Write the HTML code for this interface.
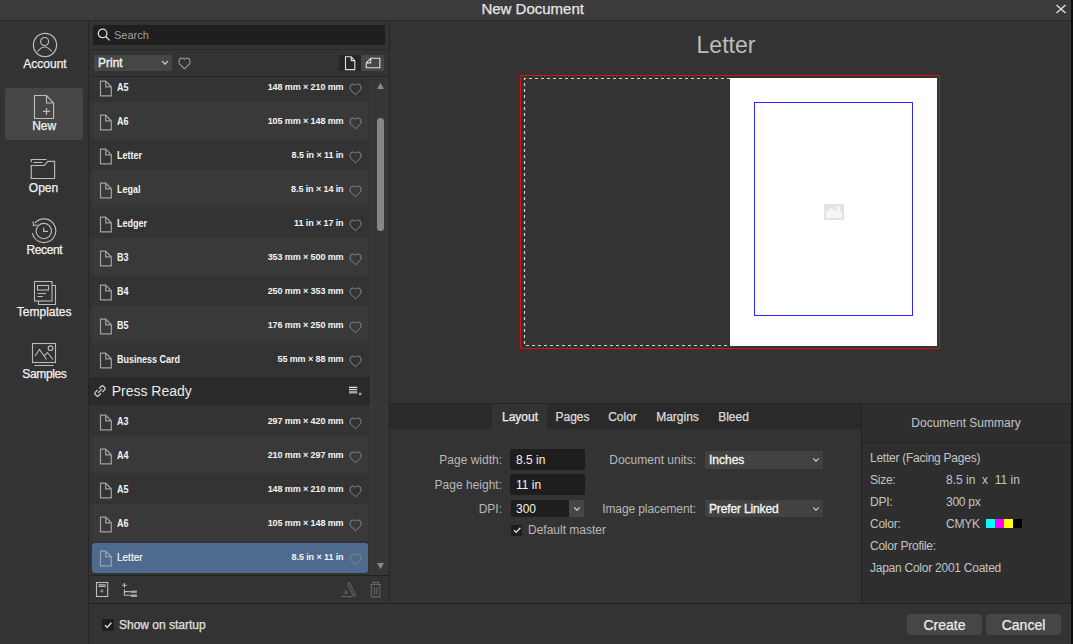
<!DOCTYPE html>
<html><head><meta charset="utf-8"><style>
html,body{margin:0;padding:0;width:1073px;height:644px;overflow:hidden;background:#333;}
body div{position:absolute;}
.t{white-space:nowrap;line-height:1;font-family:"Liberation Sans", sans-serif;}
.b{-webkit-text-stroke:0.25px currentColor;}
body{font-family:"Liberation Sans", sans-serif;}
</style></head><body>
<div style="left:0px;top:0px;width:1073px;height:644px;background:#333333;"></div>
<div style="left:0px;top:0px;width:1073px;height:20px;background:#3b3b3b;"></div>
<div style="left:0px;top:20px;width:1071px;height:1px;background:#282828;"></div>
<div class="t b" style="top:0.90px;font-size:15px;color:#e6e6e6;font-weight:normal;left:232.70000000000005px;width:600px;text-align:center;">New Document</div>
<svg style="position:absolute;left:1055px;top:4px;" width="12" height="10" viewBox="0 0 12 10"><path d="M1.5 1 L10.5 9 M10.5 1 L1.5 9" stroke="#e0e0e0" stroke-width="1.4"/></svg>
<div style="left:1071px;top:0px;width:2px;height:644px;background:#0e0e0e;"></div>
<div style="left:5px;top:88px;width:78px;height:52px;background:#464646;border-radius:3px;"></div>
<svg style="position:absolute;left:32px;top:32px;" width="26" height="26" viewBox="0 0 26 26"><g fill="none" stroke="#bcbcbc" stroke-width="1.2"><circle cx="13" cy="13" r="11.6"/><circle cx="12.6" cy="9.5" r="4"/><path d="M5.5 19.5 Q12.6 10.5 19.8 19.5"/></g></svg>
<div class="t b" style="top:57.54px;font-size:12px;color:#f2f2f2;font-weight:normal;left:-255px;width:600px;text-align:center;">Account</div>
<svg style="position:absolute;left:33px;top:94px;" width="23" height="26" viewBox="0 0 23 26"><g fill="none" stroke="#bcbcbc" stroke-width="1.15"><path d="M1.5 1.5 H13.5 L20.6 9 V24.5 H1.5 Z M13.5 1.5 V9 H20.6"/><path d="M13.5 13.9 V20.9 M10 17.4 H17"/></g></svg>
<div class="t b" style="top:120.14px;font-size:12px;color:#f2f2f2;font-weight:normal;left:-255.8px;width:600px;text-align:center;">New</div>
<svg style="position:absolute;left:30px;top:157px;" width="26" height="23" viewBox="0 0 26 23"><g fill="none" stroke="#bcbcbc" stroke-width="1.15"><path d="M1.25 5.2 V2.5 H16.5 M3.4 5.5 H12.4 M1.25 8.5 H14.3 L17.8 4.4 H24.6 V21.5 H1.25 Z"/></g></svg>
<div class="t b" style="top:181.64px;font-size:12px;color:#f2f2f2;font-weight:normal;left:-256.5px;width:600px;text-align:center;">Open</div>
<svg style="position:absolute;left:31px;top:217px;" width="27" height="27" viewBox="0 0 27 27"><g fill="none" stroke="#bcbcbc" stroke-width="1.15"><path d="M1.4 16 A11.8 11.8 0 1 0 3.96 6.12"/><path d="M2 4.5 L2.5 8.5 L6.5 8"/><circle cx="12.8" cy="14" r="7.7"/><path d="M12.7 10.5 V14.4 H17"/></g></svg>
<div class="t b" style="top:243.74px;font-size:12px;color:#f2f2f2;font-weight:normal;left:-255.7px;width:600px;text-align:center;letter-spacing:-0.4px;">Recent</div>
<svg style="position:absolute;left:33px;top:280px;" width="24" height="26" viewBox="0 0 24 26"><g fill="none" stroke="#bcbcbc" stroke-width="1.1"><rect x="1.5" y="1.5" width="17.5" height="19.5"/><path d="M19 5.5 H22.5 V24.5 H5.5 V21"/><rect x="4.5" y="5.5" width="11" height="4.5"/><path d="M4.5 13.5 H13 M4.5 16.5 H10"/></g></svg>
<div class="t b" style="top:305.54px;font-size:12px;color:#f2f2f2;font-weight:normal;left:-255.8px;width:600px;text-align:center;">Templates</div>
<svg style="position:absolute;left:31px;top:342px;" width="26" height="25" viewBox="0 0 26 25"><g fill="none" stroke="#bcbcbc" stroke-width="1.1"><rect x="1.5" y="1.5" width="23" height="19"/><path d="M4 14 L8.5 7.5 L15.5 17.5 M13 14 L16.5 10.5 L22 17.5 M3.5 23.5 H22.5"/><circle cx="19.5" cy="6.2" r="2.3"/></g></svg>
<div class="t b" style="top:367.54px;font-size:12px;color:#f2f2f2;font-weight:normal;left:-255.6px;width:600px;text-align:center;letter-spacing:-0.35px;">Samples</div>
<div style="left:88px;top:20px;width:1px;height:624px;background:#262626;"></div>
<div style="left:389px;top:20px;width:1px;height:583px;background:#262626;"></div>
<div style="left:93px;top:25px;width:292px;height:20px;background:#1f1f1f;border-radius:1px;"></div>
<svg style="position:absolute;left:97px;top:28px;" width="14" height="14" viewBox="0 0 14 14"><g fill="none" stroke="#dcdcdc" stroke-width="1.3"><circle cx="5.6" cy="5.4" r="4.3"/><path d="M8.7 8.5 L12.6 12.4"/></g></svg>
<div class="t" style="top:29.59px;font-size:11px;color:#a0a0a0;font-weight:normal;left:114px;">Search</div>
<div style="left:89px;top:49px;width:300px;height:1px;background:#282828;"></div>
<div style="left:94px;top:55px;width:78px;height:16px;background:#464646;border-radius:1px;"></div>
<div class="t" style="top:57.04px;font-size:12px;color:#f2f2f2;font-weight:normal;left:98px;-webkit-text-stroke:0.35px #f2f2f2;">Print</div>
<svg style="position:absolute;left:161px;top:60px;" width="8" height="6" viewBox="0 0 8 6"><path d="M1.2 1.2 L4 4.2 L6.8 1.2" fill="none" stroke="#dcdcdc" stroke-width="1.1"/></svg>
<svg style="position:absolute;left:178.4px;top:56.5px;" width="13" height="13" viewBox="0 0 13 13"><path d="M6 11.3 L1.2 6.6 Q0.3 5.5 0.5 3.6 Q0.8 0.6 3.3 0.5 Q5 0.5 6 1.9 Q7 0.5 8.7 0.5 Q11.2 0.6 11.5 3.6 Q11.7 5.5 10.8 6.6 Z" fill="none" stroke="#9a9a9a" stroke-width="1.1" transform="translate(0.5,0.5)"/></svg>
<div style="left:339px;top:55px;width:22px;height:16px;background:#262626;"></div>
<div style="left:361px;top:55px;width:23px;height:16px;background:#474747;"></div>
<svg style="position:absolute;left:344px;top:56px;" width="12" height="15" viewBox="0 0 12 15"><path d="M1.5 0.8 H7.2 L10.8 4.6 V13.6 H1.5 Z M7.2 0.8 V4.6 H10.8" fill="none" stroke="#e0e0e0" stroke-width="1.1"/></svg>
<svg style="position:absolute;left:364px;top:57px;" width="18" height="13" viewBox="0 0 18 13"><path d="M2.3 5.9 L6.7 1.2 H15.8 V10.7 H2.3 Z M2.3 5.9 H6.7 V1.2" fill="none" stroke="#e0e0e0" stroke-width="1.1"/></svg>
<div style="left:89px;top:76px;width:300px;height:1px;background:#262626;"></div>
<div style="left:89px;top:77px;width:281px;height:498px;overflow:hidden;">
<div style="left:-89px;top:-77px;width:1073px;height:644px;">
<svg style="position:absolute;left:98.5px;top:79.5px;" width="13" height="17" viewBox="0 0 13 17"><path d="M1.5 1.1 H6.7 L12.3 6.8 V15.8 H1.5 Z M6.7 1.1 V6.8 H12.3" fill="none" stroke="#a2a2a2" stroke-width="1.2"/></svg>
<div class="t" style="top:83.03px;font-size:10px;color:#f4f4f4;font-weight:bold;left:117px;transform:scaleX(0.9);transform-origin:0 0;">A5</div>
<div class="t" style="top:83.38px;font-size:9px;color:#f4f4f4;font-weight:bold;right:729.5px;text-align:right;letter-spacing:-0.1px;">148 mm × 210 mm</div>
<svg style="position:absolute;left:348.6px;top:83.4px;" width="13" height="13" viewBox="0 0 13 13"><path d="M6 11.3 L1.2 6.6 Q0.3 5.5 0.5 3.6 Q0.8 0.6 3.3 0.5 Q5 0.5 6 1.9 Q7 0.5 8.7 0.5 Q11.2 0.6 11.5 3.6 Q11.7 5.5 10.8 6.6 Z" fill="none" stroke="#868686" stroke-width="1" transform="translate(0.5,0.5)"/></svg>
<div style="left:92px;top:102px;width:276px;height:37px;background:#393939;"></div>
<svg style="position:absolute;left:98.5px;top:113.5px;" width="13" height="17" viewBox="0 0 13 17"><path d="M1.5 1.1 H6.7 L12.3 6.8 V15.8 H1.5 Z M6.7 1.1 V6.8 H12.3" fill="none" stroke="#a2a2a2" stroke-width="1.2"/></svg>
<div class="t" style="top:117.03px;font-size:10px;color:#f4f4f4;font-weight:bold;left:117px;transform:scaleX(0.9);transform-origin:0 0;">A6</div>
<div class="t" style="top:117.38px;font-size:9px;color:#f4f4f4;font-weight:bold;right:729.5px;text-align:right;letter-spacing:-0.1px;">105 mm × 148 mm</div>
<svg style="position:absolute;left:348.6px;top:117.4px;" width="13" height="13" viewBox="0 0 13 13"><path d="M6 11.3 L1.2 6.6 Q0.3 5.5 0.5 3.6 Q0.8 0.6 3.3 0.5 Q5 0.5 6 1.9 Q7 0.5 8.7 0.5 Q11.2 0.6 11.5 3.6 Q11.7 5.5 10.8 6.6 Z" fill="none" stroke="#868686" stroke-width="1" transform="translate(0.5,0.5)"/></svg>
<svg style="position:absolute;left:98.5px;top:147.5px;" width="13" height="17" viewBox="0 0 13 17"><path d="M1.5 1.1 H6.7 L12.3 6.8 V15.8 H1.5 Z M6.7 1.1 V6.8 H12.3" fill="none" stroke="#a2a2a2" stroke-width="1.2"/></svg>
<div class="t" style="top:151.03px;font-size:10px;color:#f4f4f4;font-weight:bold;left:117px;transform:scaleX(0.9);transform-origin:0 0;">Letter</div>
<div class="t" style="top:151.38px;font-size:9px;color:#f4f4f4;font-weight:bold;right:729.5px;text-align:right;letter-spacing:-0.1px;">8.5 in × 11 in</div>
<svg style="position:absolute;left:348.6px;top:151.4px;" width="13" height="13" viewBox="0 0 13 13"><path d="M6 11.3 L1.2 6.6 Q0.3 5.5 0.5 3.6 Q0.8 0.6 3.3 0.5 Q5 0.5 6 1.9 Q7 0.5 8.7 0.5 Q11.2 0.6 11.5 3.6 Q11.7 5.5 10.8 6.6 Z" fill="none" stroke="#868686" stroke-width="1" transform="translate(0.5,0.5)"/></svg>
<div style="left:92px;top:170px;width:276px;height:37px;background:#393939;"></div>
<svg style="position:absolute;left:98.5px;top:181.5px;" width="13" height="17" viewBox="0 0 13 17"><path d="M1.5 1.1 H6.7 L12.3 6.8 V15.8 H1.5 Z M6.7 1.1 V6.8 H12.3" fill="none" stroke="#a2a2a2" stroke-width="1.2"/></svg>
<div class="t" style="top:185.03px;font-size:10px;color:#f4f4f4;font-weight:bold;left:117px;transform:scaleX(0.9);transform-origin:0 0;">Legal</div>
<div class="t" style="top:185.38px;font-size:9px;color:#f4f4f4;font-weight:bold;right:729.5px;text-align:right;letter-spacing:-0.1px;">8.5 in × 14 in</div>
<svg style="position:absolute;left:348.6px;top:185.4px;" width="13" height="13" viewBox="0 0 13 13"><path d="M6 11.3 L1.2 6.6 Q0.3 5.5 0.5 3.6 Q0.8 0.6 3.3 0.5 Q5 0.5 6 1.9 Q7 0.5 8.7 0.5 Q11.2 0.6 11.5 3.6 Q11.7 5.5 10.8 6.6 Z" fill="none" stroke="#868686" stroke-width="1" transform="translate(0.5,0.5)"/></svg>
<svg style="position:absolute;left:98.5px;top:215.5px;" width="13" height="17" viewBox="0 0 13 17"><path d="M1.5 1.1 H6.7 L12.3 6.8 V15.8 H1.5 Z M6.7 1.1 V6.8 H12.3" fill="none" stroke="#a2a2a2" stroke-width="1.2"/></svg>
<div class="t" style="top:219.03px;font-size:10px;color:#f4f4f4;font-weight:bold;left:117px;transform:scaleX(0.9);transform-origin:0 0;">Ledger</div>
<div class="t" style="top:219.38px;font-size:9px;color:#f4f4f4;font-weight:bold;right:729.5px;text-align:right;letter-spacing:-0.1px;">11 in × 17 in</div>
<svg style="position:absolute;left:348.6px;top:219.4px;" width="13" height="13" viewBox="0 0 13 13"><path d="M6 11.3 L1.2 6.6 Q0.3 5.5 0.5 3.6 Q0.8 0.6 3.3 0.5 Q5 0.5 6 1.9 Q7 0.5 8.7 0.5 Q11.2 0.6 11.5 3.6 Q11.7 5.5 10.8 6.6 Z" fill="none" stroke="#868686" stroke-width="1" transform="translate(0.5,0.5)"/></svg>
<div style="left:92px;top:238px;width:276px;height:37px;background:#393939;"></div>
<svg style="position:absolute;left:98.5px;top:249.5px;" width="13" height="17" viewBox="0 0 13 17"><path d="M1.5 1.1 H6.7 L12.3 6.8 V15.8 H1.5 Z M6.7 1.1 V6.8 H12.3" fill="none" stroke="#a2a2a2" stroke-width="1.2"/></svg>
<div class="t" style="top:253.03px;font-size:10px;color:#f4f4f4;font-weight:bold;left:117px;transform:scaleX(0.9);transform-origin:0 0;">B3</div>
<div class="t" style="top:253.38px;font-size:9px;color:#f4f4f4;font-weight:bold;right:729.5px;text-align:right;letter-spacing:-0.1px;">353 mm × 500 mm</div>
<svg style="position:absolute;left:348.6px;top:253.4px;" width="13" height="13" viewBox="0 0 13 13"><path d="M6 11.3 L1.2 6.6 Q0.3 5.5 0.5 3.6 Q0.8 0.6 3.3 0.5 Q5 0.5 6 1.9 Q7 0.5 8.7 0.5 Q11.2 0.6 11.5 3.6 Q11.7 5.5 10.8 6.6 Z" fill="none" stroke="#868686" stroke-width="1" transform="translate(0.5,0.5)"/></svg>
<svg style="position:absolute;left:98.5px;top:283.5px;" width="13" height="17" viewBox="0 0 13 17"><path d="M1.5 1.1 H6.7 L12.3 6.8 V15.8 H1.5 Z M6.7 1.1 V6.8 H12.3" fill="none" stroke="#a2a2a2" stroke-width="1.2"/></svg>
<div class="t" style="top:287.03px;font-size:10px;color:#f4f4f4;font-weight:bold;left:117px;transform:scaleX(0.9);transform-origin:0 0;">B4</div>
<div class="t" style="top:287.38px;font-size:9px;color:#f4f4f4;font-weight:bold;right:729.5px;text-align:right;letter-spacing:-0.1px;">250 mm × 353 mm</div>
<svg style="position:absolute;left:348.6px;top:287.4px;" width="13" height="13" viewBox="0 0 13 13"><path d="M6 11.3 L1.2 6.6 Q0.3 5.5 0.5 3.6 Q0.8 0.6 3.3 0.5 Q5 0.5 6 1.9 Q7 0.5 8.7 0.5 Q11.2 0.6 11.5 3.6 Q11.7 5.5 10.8 6.6 Z" fill="none" stroke="#868686" stroke-width="1" transform="translate(0.5,0.5)"/></svg>
<div style="left:92px;top:306px;width:276px;height:37px;background:#393939;"></div>
<svg style="position:absolute;left:98.5px;top:317.5px;" width="13" height="17" viewBox="0 0 13 17"><path d="M1.5 1.1 H6.7 L12.3 6.8 V15.8 H1.5 Z M6.7 1.1 V6.8 H12.3" fill="none" stroke="#a2a2a2" stroke-width="1.2"/></svg>
<div class="t" style="top:321.03px;font-size:10px;color:#f4f4f4;font-weight:bold;left:117px;transform:scaleX(0.9);transform-origin:0 0;">B5</div>
<div class="t" style="top:321.38px;font-size:9px;color:#f4f4f4;font-weight:bold;right:729.5px;text-align:right;letter-spacing:-0.1px;">176 mm × 250 mm</div>
<svg style="position:absolute;left:348.6px;top:321.4px;" width="13" height="13" viewBox="0 0 13 13"><path d="M6 11.3 L1.2 6.6 Q0.3 5.5 0.5 3.6 Q0.8 0.6 3.3 0.5 Q5 0.5 6 1.9 Q7 0.5 8.7 0.5 Q11.2 0.6 11.5 3.6 Q11.7 5.5 10.8 6.6 Z" fill="none" stroke="#868686" stroke-width="1" transform="translate(0.5,0.5)"/></svg>
<svg style="position:absolute;left:98.5px;top:351.5px;" width="13" height="17" viewBox="0 0 13 17"><path d="M1.5 1.1 H6.7 L12.3 6.8 V15.8 H1.5 Z M6.7 1.1 V6.8 H12.3" fill="none" stroke="#a2a2a2" stroke-width="1.2"/></svg>
<div class="t" style="top:355.03px;font-size:10px;color:#f4f4f4;font-weight:bold;left:117px;transform:scaleX(0.9);transform-origin:0 0;">Business Card</div>
<div class="t" style="top:355.38px;font-size:9px;color:#f4f4f4;font-weight:bold;right:729.5px;text-align:right;letter-spacing:-0.1px;">55 mm × 88 mm</div>
<svg style="position:absolute;left:348.6px;top:355.4px;" width="13" height="13" viewBox="0 0 13 13"><path d="M6 11.3 L1.2 6.6 Q0.3 5.5 0.5 3.6 Q0.8 0.6 3.3 0.5 Q5 0.5 6 1.9 Q7 0.5 8.7 0.5 Q11.2 0.6 11.5 3.6 Q11.7 5.5 10.8 6.6 Z" fill="none" stroke="#868686" stroke-width="1" transform="translate(0.5,0.5)"/></svg>
<div style="left:89px;top:377px;width:281px;height:28px;background:#2a2a2a;"></div>
<svg style="position:absolute;left:93px;top:384px;" width="14" height="14" viewBox="0 0 14 14"><g fill="none" stroke="#d2d2d2" stroke-width="1.25" transform="rotate(-45 7 7)"><path d="M6 4.6 H2.6 Q1.2 4.6 1.2 6 V8 Q1.2 9.4 2.6 9.4 H6 M8 4.6 H11.4 Q12.8 4.6 12.8 6 V8 Q12.8 9.4 11.4 9.4 H8 M4.3 7 H9.7"/></g></svg>
<div class="t" style="top:384.05px;font-size:14px;color:#e8e8e8;font-weight:normal;left:111.7px;">Press Ready</div>
<svg style="position:absolute;left:348px;top:386px;" width="14" height="10" viewBox="0 0 14 10"><rect x="1" y="0.7" width="8.2" height="1.3" fill="#e0e0e0"/><rect x="1" y="2.9" width="8.2" height="1.3" fill="#d8d8d8"/><rect x="1" y="5.1" width="8.2" height="2.4" fill="#a8a8a8"/><rect x="11" y="6.7" width="2.4" height="2.4" fill="#a8a8a8"/></svg>
<svg style="position:absolute;left:98.5px;top:413.5px;" width="13" height="17" viewBox="0 0 13 17"><path d="M1.5 1.1 H6.7 L12.3 6.8 V15.8 H1.5 Z M6.7 1.1 V6.8 H12.3" fill="none" stroke="#a2a2a2" stroke-width="1.2"/></svg>
<div class="t" style="top:417.03px;font-size:10px;color:#f4f4f4;font-weight:bold;left:117px;transform:scaleX(0.9);transform-origin:0 0;">A3</div>
<div class="t" style="top:417.38px;font-size:9px;color:#f4f4f4;font-weight:bold;right:729.5px;text-align:right;letter-spacing:-0.1px;">297 mm × 420 mm</div>
<svg style="position:absolute;left:348.6px;top:417.4px;" width="13" height="13" viewBox="0 0 13 13"><path d="M6 11.3 L1.2 6.6 Q0.3 5.5 0.5 3.6 Q0.8 0.6 3.3 0.5 Q5 0.5 6 1.9 Q7 0.5 8.7 0.5 Q11.2 0.6 11.5 3.6 Q11.7 5.5 10.8 6.6 Z" fill="none" stroke="#868686" stroke-width="1" transform="translate(0.5,0.5)"/></svg>
<div style="left:92px;top:436px;width:276px;height:37px;background:#393939;"></div>
<svg style="position:absolute;left:98.5px;top:447.5px;" width="13" height="17" viewBox="0 0 13 17"><path d="M1.5 1.1 H6.7 L12.3 6.8 V15.8 H1.5 Z M6.7 1.1 V6.8 H12.3" fill="none" stroke="#a2a2a2" stroke-width="1.2"/></svg>
<div class="t" style="top:451.03px;font-size:10px;color:#f4f4f4;font-weight:bold;left:117px;transform:scaleX(0.9);transform-origin:0 0;">A4</div>
<div class="t" style="top:451.38px;font-size:9px;color:#f4f4f4;font-weight:bold;right:729.5px;text-align:right;letter-spacing:-0.1px;">210 mm × 297 mm</div>
<svg style="position:absolute;left:348.6px;top:451.4px;" width="13" height="13" viewBox="0 0 13 13"><path d="M6 11.3 L1.2 6.6 Q0.3 5.5 0.5 3.6 Q0.8 0.6 3.3 0.5 Q5 0.5 6 1.9 Q7 0.5 8.7 0.5 Q11.2 0.6 11.5 3.6 Q11.7 5.5 10.8 6.6 Z" fill="none" stroke="#868686" stroke-width="1" transform="translate(0.5,0.5)"/></svg>
<svg style="position:absolute;left:98.5px;top:481.5px;" width="13" height="17" viewBox="0 0 13 17"><path d="M1.5 1.1 H6.7 L12.3 6.8 V15.8 H1.5 Z M6.7 1.1 V6.8 H12.3" fill="none" stroke="#a2a2a2" stroke-width="1.2"/></svg>
<div class="t" style="top:485.03px;font-size:10px;color:#f4f4f4;font-weight:bold;left:117px;transform:scaleX(0.9);transform-origin:0 0;">A5</div>
<div class="t" style="top:485.38px;font-size:9px;color:#f4f4f4;font-weight:bold;right:729.5px;text-align:right;letter-spacing:-0.1px;">148 mm × 210 mm</div>
<svg style="position:absolute;left:348.6px;top:485.4px;" width="13" height="13" viewBox="0 0 13 13"><path d="M6 11.3 L1.2 6.6 Q0.3 5.5 0.5 3.6 Q0.8 0.6 3.3 0.5 Q5 0.5 6 1.9 Q7 0.5 8.7 0.5 Q11.2 0.6 11.5 3.6 Q11.7 5.5 10.8 6.6 Z" fill="none" stroke="#868686" stroke-width="1" transform="translate(0.5,0.5)"/></svg>
<div style="left:92px;top:504px;width:276px;height:37px;background:#393939;"></div>
<svg style="position:absolute;left:98.5px;top:515.5px;" width="13" height="17" viewBox="0 0 13 17"><path d="M1.5 1.1 H6.7 L12.3 6.8 V15.8 H1.5 Z M6.7 1.1 V6.8 H12.3" fill="none" stroke="#a2a2a2" stroke-width="1.2"/></svg>
<div class="t" style="top:519.03px;font-size:10px;color:#f4f4f4;font-weight:bold;left:117px;transform:scaleX(0.9);transform-origin:0 0;">A6</div>
<div class="t" style="top:519.38px;font-size:9px;color:#f4f4f4;font-weight:bold;right:729.5px;text-align:right;letter-spacing:-0.1px;">105 mm × 148 mm</div>
<svg style="position:absolute;left:348.6px;top:519.4px;" width="13" height="13" viewBox="0 0 13 13"><path d="M6 11.3 L1.2 6.6 Q0.3 5.5 0.5 3.6 Q0.8 0.6 3.3 0.5 Q5 0.5 6 1.9 Q7 0.5 8.7 0.5 Q11.2 0.6 11.5 3.6 Q11.7 5.5 10.8 6.6 Z" fill="none" stroke="#868686" stroke-width="1" transform="translate(0.5,0.5)"/></svg>
<div style="left:92px;top:543px;width:276px;height:30px;background:#4e6a8e;border-radius:3px;"></div>
<svg style="position:absolute;left:98.5px;top:549.5px;" width="13" height="17" viewBox="0 0 13 17"><path d="M1.5 1.1 H6.7 L12.3 6.8 V15.8 H1.5 Z M6.7 1.1 V6.8 H12.3" fill="none" stroke="#9aa4b2" stroke-width="1.2"/></svg>
<div class="t" style="top:553.03px;font-size:10px;color:#f8f8f8;font-weight:normal;left:117px;-webkit-text-stroke:0.15px #f8f8f8;">Letter</div>
<div class="t" style="top:553.38px;font-size:9px;color:#f4f4f4;font-weight:bold;right:729.5px;text-align:right;letter-spacing:-0.1px;">8.5 in × 11 in</div>
<svg style="position:absolute;left:348.6px;top:553.4px;" width="13" height="13" viewBox="0 0 13 13"><path d="M6 11.3 L1.2 6.6 Q0.3 5.5 0.5 3.6 Q0.8 0.6 3.3 0.5 Q5 0.5 6 1.9 Q7 0.5 8.7 0.5 Q11.2 0.6 11.5 3.6 Q11.7 5.5 10.8 6.6 Z" fill="none" stroke="#868686" stroke-width="1" transform="translate(0.5,0.5)"/></svg>
</div></div>
<div style="left:370px;top:77px;width:19px;height:498px;background:#363636;"></div>
<svg style="position:absolute;left:376px;top:82px;" width="9" height="8" viewBox="0 0 9 8"><path d="M4.5 0.8 L8 7 H1 Z" fill="#8a8a8a"/></svg>
<div style="left:371px;top:77px;width:1px;height:498px;background:#3b3b3b;"></div>
<div style="left:385px;top:77px;width:1px;height:498px;background:#3b3b3b;"></div>
<div style="left:377px;top:118px;width:7px;height:113px;background:#878787;border-radius:3.5px;"></div>
<svg style="position:absolute;left:376px;top:562px;" width="9" height="8" viewBox="0 0 9 8"><path d="M1 1 H8 L4.5 7.2 Z" fill="#8a8a8a"/></svg>
<div style="left:89px;top:575px;width:300px;height:1px;background:#222222;"></div>
<svg style="position:absolute;left:95px;top:581px;" width="14" height="17" viewBox="0 0 14 17"><g fill="none" stroke="#bdbdbd" stroke-width="1.1"><rect x="1.5" y="1.5" width="11.2" height="14"/><path d="M3.5 3.8 H10.7 M3.5 5.4 H10.7"/></g><path d="M6.8 8.6 V11.6 M5.3 10.1 H8.3" stroke="#8f8f8f" stroke-width="1.5"/></svg>
<svg style="position:absolute;left:120px;top:582px;" width="19" height="16" viewBox="0 0 19 16"><g fill="none" stroke="#bdbdbd" stroke-width="1.1"><path d="M4.4 0.9 V5.5 M2.1 3.2 H6.7 M4.4 7.5 V13.3 H10.5 M4.4 9.6 H10.5"/></g><rect x="10.8" y="8.6" width="6.1" height="2.3" fill="#a8a8a8"/><rect x="10.8" y="12.4" width="6.1" height="2.6" fill="#a8a8a8"/></svg>
<svg style="position:absolute;left:340px;top:581px;" width="17" height="17" viewBox="0 0 17 17"><path d="M1.4 15.6 H12.1" stroke="#626262" stroke-width="1.1"/><path d="M3.8 13 L6 8.4 L8.3 13 Z" fill="#565656"/><line x1="9" y1="3" x2="14.2" y2="14.2" stroke="#626262" stroke-width="3.3" stroke-linecap="round"/><line x1="9" y1="3" x2="14.2" y2="14.2" stroke="#333333" stroke-width="1.1" stroke-linecap="round"/></svg>
<svg style="position:absolute;left:369px;top:581px;" width="13" height="17" viewBox="0 0 13 17"><g fill="none" stroke="#646464" stroke-width="1.1"><path d="M1 3.5 H12 M4 3.5 V1.4 H9.4 V3.5 M2.4 3.5 V15.9 H10.8 V3.5 M5.4 6 V13.5 M7.8 6 V13.5"/></g></svg>
<div style="left:89px;top:603px;width:982px;height:1px;background:#222222;"></div>
<div style="left:88px;top:603px;width:1px;height:41px;background:#262626;"></div>
<div style="left:102px;top:619px;width:12px;height:12px;background:#1e1e1e;border-radius:1px;"></div>
<svg style="position:absolute;left:102px;top:619px;" width="12" height="12" viewBox="0 0 12 12"><path d="M3 6.2 L5.2 8.4 L9.4 3.8" fill="none" stroke="#e8e8e8" stroke-width="1.3"/></svg>
<div class="t b" style="top:618.64px;font-size:12px;color:#e0e0e0;font-weight:normal;left:119px;">Show on startup</div>
<div style="left:907px;top:614px;width:75px;height:21px;background:#464646;border-radius:3px;"></div>
<div class="t b" style="top:618.05px;font-size:14px;color:#ececec;font-weight:normal;left:644.5px;width:600px;text-align:center;">Create</div>
<div style="left:986px;top:614px;width:75px;height:21px;background:#464646;border-radius:3px;"></div>
<div class="t b" style="top:618.05px;font-size:14px;color:#ececec;font-weight:normal;left:723.5px;width:600px;text-align:center;">Cancel</div>
<div class="t" style="top:33.53px;font-size:23px;color:#bcbcbc;font-weight:normal;left:426px;width:600px;text-align:center;">Letter</div>
<div style="left:520px;top:74.6px;width:420px;height:274.6px;background:transparent;box-sizing:border-box;border:1.6px solid #d81010;"></div>
<div style="left:730px;top:78px;width:207.3px;height:268.4px;background:#ffffff;"></div>
<svg style="position:absolute;left:520px;top:74px;" width="212" height="276" viewBox="0 0 212 276"><path d="M210 4.5 H4.5 V271.5 H210" fill="none" stroke="#d0d0d0" stroke-width="1.2" stroke-dasharray="3 3"/></svg>
<div style="left:754px;top:102px;width:159px;height:213.5px;background:transparent;box-sizing:border-box;border:1.1px solid #2a2aff;"></div>
<svg style="position:absolute;left:823px;top:203px;" width="22" height="18" viewBox="0 0 22 18"><g fill="#e3e3e3"><rect x="1" y="1" width="20" height="16"/></g><path d="M3 9 L8 5 L12 8 L15 6 L19 9 V15 H3 Z" fill="#f6f6f6"/><circle cx="15.5" cy="5" r="1.8" fill="#f6f6f6"/></svg>
<div style="left:390px;top:403px;width:681px;height:1px;background:#252525;"></div>
<div style="left:390px;top:404px;width:681px;height:25px;background:#2a2a2a;"></div>
<div style="left:492px;top:404px;width:55px;height:25px;background:#333333;"></div>
<div class="t b" style="top:410.94px;font-size:12px;color:#f0f0f0;font-weight:normal;left:220px;width:600px;text-align:center;">Layout</div>
<div class="t b" style="top:410.94px;font-size:12px;color:#dcdcdc;font-weight:normal;left:272.5px;width:600px;text-align:center;">Pages</div>
<div class="t b" style="top:410.94px;font-size:12px;color:#dcdcdc;font-weight:normal;left:322.5px;width:600px;text-align:center;">Color</div>
<div class="t b" style="top:410.94px;font-size:12px;color:#dcdcdc;font-weight:normal;left:377.5px;width:600px;text-align:center;">Margins</div>
<div class="t b" style="top:410.94px;font-size:12px;color:#dcdcdc;font-weight:normal;left:433.5px;width:600px;text-align:center;">Bleed</div>
<div class="t" style="top:453.84px;font-size:12px;color:#b8b8b8;font-weight:normal;right:571px;text-align:right;">Page width:</div>
<div class="t" style="top:478.54px;font-size:12px;color:#b8b8b8;font-weight:normal;right:571px;text-align:right;">Page height:</div>
<div class="t" style="top:502.54px;font-size:12px;color:#b8b8b8;font-weight:normal;right:571px;text-align:right;">DPI:</div>
<div style="left:510px;top:449px;width:75px;height:21px;background:#1e1e1e;border-radius:2px;"></div>
<div style="left:510px;top:474px;width:75px;height:21px;background:#1e1e1e;border-radius:2px;"></div>
<div style="left:511px;top:500px;width:58px;height:17px;background:#1e1e1e;border-radius:1px;"></div>
<div style="left:569px;top:500px;width:15px;height:17px;background:#464646;"></div>
<svg style="position:absolute;left:573px;top:506px;" width="8" height="6" viewBox="0 0 8 6"><path d="M1.2 1.4 L4 4.2 L6.8 1.4" fill="none" stroke="#dcdcdc" stroke-width="1.1"/></svg>
<div class="t" style="top:453.84px;font-size:12px;color:#f2f2f2;font-weight:normal;left:516px;">8.5 in</div>
<div class="t" style="top:478.54px;font-size:12px;color:#f2f2f2;font-weight:normal;left:516px;">11 in</div>
<div class="t" style="top:502.54px;font-size:12px;color:#f2f2f2;font-weight:normal;left:516px;">300</div>
<div style="left:511px;top:524.5px;width:11px;height:11px;background:#1e1e1e;border-radius:1px;"></div>
<svg style="position:absolute;left:511px;top:524px;" width="12" height="12" viewBox="0 0 12 12"><path d="M3 6.2 L5.2 8.4 L9.4 3.8" fill="none" stroke="#e8e8e8" stroke-width="1.3"/></svg>
<div class="t" style="top:523.84px;font-size:12px;color:#b8b8b8;font-weight:normal;left:528px;">Default master</div>
<div class="t" style="top:453.84px;font-size:12px;color:#b8b8b8;font-weight:normal;right:377px;text-align:right;">Document units:</div>
<div class="t" style="top:502.54px;font-size:12px;color:#b8b8b8;font-weight:normal;right:377px;text-align:right;letter-spacing:-0.1px;">Image placement:</div>
<div style="left:705px;top:450.5px;width:118px;height:18px;background:#424242;border-radius:1px;"></div>
<div style="left:705px;top:500px;width:118px;height:17px;background:#424242;border-radius:1px;"></div>
<div class="t" style="top:454.34px;font-size:12px;color:#f4f4f4;font-weight:normal;left:709px;-webkit-text-stroke:0.35px #f4f4f4;">Inches</div>
<div class="t" style="top:502.84px;font-size:12px;color:#f4f4f4;font-weight:normal;left:709px;letter-spacing:-0.15px;-webkit-text-stroke:0.35px #f4f4f4;">Prefer Linked</div>
<svg style="position:absolute;left:812px;top:457px;" width="8" height="6" viewBox="0 0 8 6"><path d="M1.2 1.4 L4 4.2 L6.8 1.4" fill="none" stroke="#d0d0d0" stroke-width="1.1"/></svg>
<svg style="position:absolute;left:812px;top:506px;" width="8" height="6" viewBox="0 0 8 6"><path d="M1.2 1.4 L4 4.2 L6.8 1.4" fill="none" stroke="#d0d0d0" stroke-width="1.1"/></svg>
<div style="left:861px;top:403px;width:1px;height:200px;background:#222222;"></div>
<div style="left:862px;top:404px;width:209px;height:199px;background:#2e2e2e;"></div>
<div style="left:862px;top:442px;width:209px;height:1px;background:#232323;"></div>
<div class="t" style="top:417.44px;font-size:12px;color:#c4c4c4;font-weight:normal;left:666px;width:600px;text-align:center;">Document Summary</div>
<div class="t" style="top:452.14px;font-size:12px;color:#c4c4c4;font-weight:normal;left:870px;letter-spacing:-0.25px;">Letter (Facing Pages)</div>
<div class="t" style="top:473.84px;font-size:12px;color:#c4c4c4;font-weight:normal;left:870px;letter-spacing:-0.25px;">Size:</div>
<div class="t" style="top:473.84px;font-size:12px;color:#c4c4c4;font-weight:normal;left:946px;">8.5 in&nbsp; x&nbsp; 11 in</div>
<div class="t" style="top:496.14px;font-size:12px;color:#c4c4c4;font-weight:normal;left:870px;letter-spacing:-0.25px;">DPI:</div>
<div class="t" style="top:496.14px;font-size:12px;color:#c4c4c4;font-weight:normal;left:946px;letter-spacing:-0.25px;">300 px</div>
<div class="t" style="top:518.04px;font-size:12px;color:#c4c4c4;font-weight:normal;left:870px;letter-spacing:-0.25px;">Color:</div>
<div class="t" style="top:518.04px;font-size:12px;color:#c4c4c4;font-weight:normal;left:946px;letter-spacing:-0.25px;">CMYK</div>
<div style="left:986px;top:519px;width:9px;height:9px;background:#00ffff;"></div>
<div style="left:995px;top:519px;width:9px;height:9px;background:#ff00ff;"></div>
<div style="left:1004px;top:519px;width:9px;height:9px;background:#ffff00;"></div>
<div style="left:1013px;top:519px;width:9px;height:9px;background:#000000;"></div>
<div class="t" style="top:540.04px;font-size:12px;color:#c4c4c4;font-weight:normal;left:870px;letter-spacing:-0.25px;">Color Profile:</div>
<div class="t" style="top:562.34px;font-size:12px;color:#c4c4c4;font-weight:normal;left:870px;letter-spacing:-0.25px;">Japan Color 2001 Coated</div>
</body></html>
